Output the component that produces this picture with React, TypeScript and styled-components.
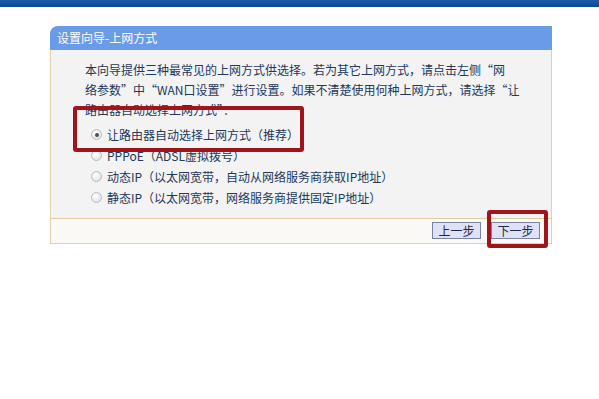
import React from "react";
import styled, { createGlobalStyle } from "styled-components";

const Global = createGlobalStyle`
  html, body { margin: 0; padding: 0; background: #ffffff; }
  body { font-family: "Noto Sans CJK SC", "Noto Sans", sans-serif; }
`;

const Page = styled.div`
  width: 599px;
  height: 399px;
  background: #ffffff;
  overflow: hidden;
`;

const TopBar = styled.div`
  height: 7px;
  background: linear-gradient(#1d5aa8, #0f4a98);
`;

const Panel = styled.div`
  position: relative;
  margin: 19px 0 0 50px;
  width: 500px;
  border: 1px solid #e6cfa8;
  border-top: none;
  border-top-left-radius: 9px;
`;

const TitleBar = styled.div`
  height: 24px;
  background: #6a9be9;
  border-top-left-radius: 8px;
  margin: 0 -1px;
  padding-left: 7px;
  color: #ffffff;
  font-size: 12px;
  line-height: 24px;
`;

const Body = styled.div`
  background: #f3f3f3;
  padding: 10px 16px 10px 34px;
  color: #22375a;
  font-size: 12px;
  border-bottom: 1px solid #e2c9a0;
`;

const Intro = styled.div`
  display: flex;
  flex-direction: column;
`;

const IntroLine = styled.span`
  line-height: 20px;
  white-space: nowrap;
`;

const Options = styled.div`
  display: flex;
  flex-direction: column;
  margin: 4px 0 0 6px;
`;

const Option = styled.label`
  display: flex;
  align-items: center;
  gap: 5px;
  height: 21px;
  line-height: 21px;
  white-space: nowrap;
`;

const Radio = styled.span<{ $checked?: boolean }>`
  position: relative;
  width: 11px;
  height: 11px;
  border-radius: 50%;
  box-sizing: border-box;
  border: 1px solid #b9bcc2;
  background: radial-gradient(circle at 40% 35%, #ffffff, #d9dbe0);
  flex: none;
  &::after {
    content: "";
    display: ${(p) => (p.$checked ? "block" : "none")};
    position: absolute;
    left: 2.5px;
    top: 2.5px;
    width: 4px;
    height: 4px;
    border-radius: 50%;
    background: #4a4d55;
  }
`;

const Footer = styled.div`
  display: flex;
  justify-content: flex-end;
  gap: 10px;
  padding: 3px 11px 0 0;
  height: 21px;
  background: #fbf9f6;
`;

const Button = styled.button`
  width: 49px;
  height: 17px;
  padding: 0;
  border: 1px solid #7a83a6;
  background: #dfe2f6;
  color: #1c2a4a;
  font-family: "Noto Sans CJK SC", sans-serif;
  font-size: 12px;
  line-height: 15px;
`;

const Highlight = styled.div<{ $l: number; $t: number; $w: number; $h: number }>`
  position: absolute;
  left: ${(p) => p.$l}px;
  top: ${(p) => p.$t}px;
  width: ${(p) => p.$w}px;
  height: ${(p) => p.$h}px;
  box-sizing: border-box;
  border: 4px solid #a0141b;
  border-radius: 3px;
  pointer-events: none;
`;

const introLines = [
  "本向导提供三种最常见的上网方式供选择。若为其它上网方式，请点击左侧“网",
  "络参数”中“WAN口设置”进行设置。如果不清楚使用何种上网方式，请选择“让",
  "路由器自动选择上网方式”：",
];

const options = [
  { text: "让路由器自动选择上网方式（推荐）", checked: true },
  { text: "PPPoE（ADSL虚拟拨号）" },
  { text: "动态IP（以太网宽带，自动从网络服务商获取IP地址）" },
  { text: "静态IP（以太网宽带，网络服务商提供固定IP地址）" },
];

export default function App() {
  return (
    <Page>
      <Global />
      <TopBar />
      <Panel>
        <TitleBar>设置向导-上网方式</TitleBar>
        <Body>
          <Intro>
            {introLines.map((l) => (
              <IntroLine key={l}>{l}</IntroLine>
            ))}
          </Intro>
          <Options>
            {options.map((o) => (
              <Option key={o.text}>
                <Radio $checked={o.checked} />
                {o.text}
              </Option>
            ))}
          </Options>
        </Body>
        <Footer>
          <Button>上一步</Button>
          <Button>下一步</Button>
        </Footer>
        <Highlight $l={22} $t={80} $w={231} $h={46} />
        <Highlight $l={436} $t={184} $w={61} $h={38} />
      </Panel>
    </Page>
  );
}
